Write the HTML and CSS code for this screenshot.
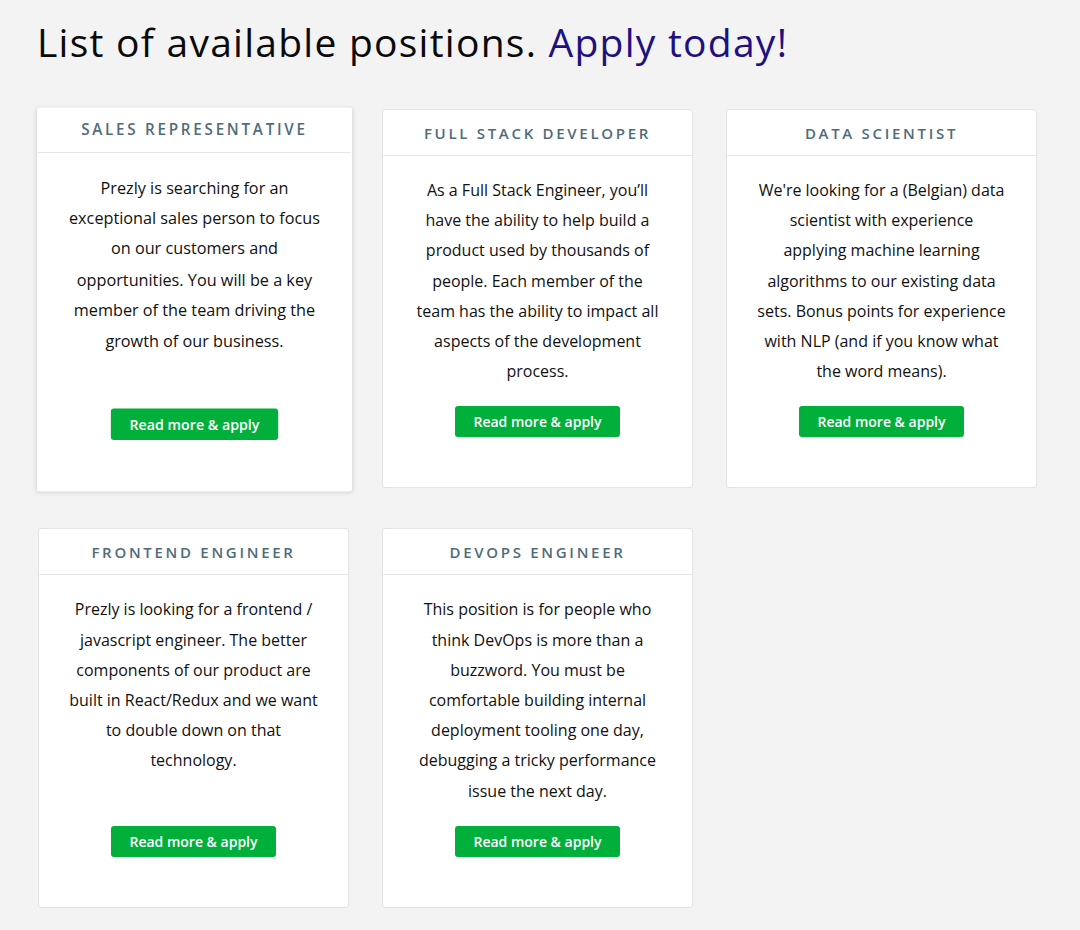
FILE: index.html
```html
<!DOCTYPE html>
<html lang="en">
<head>
<meta charset="utf-8">
<title>Available positions</title>
<link rel="stylesheet" href="styles.css">
</head>
<body>
<main class="page">
  <h1 class="title">List of available positions. <span class="title-accent">Apply today!</span></h1>
  <div class="grid">
    <article class="card card--active">
      <h2 class="card-head">Sales Representative</h2>
      <div class="card-body">
        <p class="card-text">Prezly is searching for an exceptional sales person to focus on our customers and opportunities. You will be a key member of the team driving the growth of our business.</p>
        <a class="btn" href="#">Read more &amp; apply</a>
      </div>
    </article>
    <article class="card">
      <h2 class="card-head">Full Stack Developer</h2>
      <div class="card-body">
        <p class="card-text">As a Full Stack Engineer, you’ll have the ability to help build a product used by thousands of people. Each member of the team has the ability to impact all aspects of the development process.</p>
        <a class="btn" href="#">Read more &amp; apply</a>
      </div>
    </article>
    <article class="card">
      <h2 class="card-head">Data Scientist</h2>
      <div class="card-body">
        <p class="card-text">We're looking for a (Belgian) data scientist with experience applying machine learning algorithms to our existing data sets. Bonus points for experience with NLP (and if you know what the word means).</p>
        <a class="btn" href="#">Read more &amp; apply</a>
      </div>
    </article>
    <article class="card">
      <h2 class="card-head">Frontend Engineer</h2>
      <div class="card-body">
        <p class="card-text">Prezly is looking for a frontend / javascript engineer. The better components of our product are built in React/Redux and we want to double down on that technology.</p>
        <a class="btn" href="#">Read more &amp; apply</a>
      </div>
    </article>
    <article class="card">
      <h2 class="card-head">DevOps Engineer</h2>
      <div class="card-body">
        <p class="card-text">This position is for people who think DevOps is more than a buzzword. You must be comfortable building internal deployment tooling one day, debugging a tricky performance issue the next day.</p>
        <a class="btn" href="#">Read more &amp; apply</a>
      </div>
    </article>
  </div>
</main>
</body>
</html>
```
FILE: styles.css
```css
* { box-sizing: border-box; }
html, body { margin: 0; padding: 0; }
body {
  background: #f3f3f3;
  font-family: "Open Sans", "Liberation Sans", Arial, sans-serif;
  color: #111;
}
.page {
  padding: 16px 0 40px 38px;
}
.title {
  margin: 0 0 41px -1px;
  font-size: 39px;
  font-weight: 500;
  letter-spacing: 1.25px;
  line-height: 52px;
  color: #0a0a0a;
}
.title-accent { color: #1e1080; }
.grid {
  display: grid;
  grid-template-columns: repeat(3, 311px);
  column-gap: 33px;
  row-gap: 40px;
}
.card {
  display: flex;
  flex-direction: column;
  background: #fff;
  border: 1px solid #e3e3e3;
  border-radius: 3px;
}
.card--active {
  border-color: transparent;
  box-shadow: 0 1px 4px rgba(0, 0, 0, 0.12);
  transform: translate(1px, 1px) scale(1.014);
}
.card--active .card-head {
  padding-top: 10px;
  padding-bottom: 13px;
}
.card-head {
  margin: 0;
  padding: 13px 10px 12px;
  border-bottom: 1px solid #e6e6e6;
  text-align: center;
  font-size: 15px;
  line-height: 20px;
  font-weight: 600;
  letter-spacing: 2.7px;
  text-transform: uppercase;
  color: #4f6c7a;
}
.card-body {
  flex: 1;
  display: flex;
  flex-direction: column;
  align-items: center;
  padding: 19px 30px 50px;
}
.card-text {
  margin: 0 0 20px;
  text-align: center;
  font-size: 16px;
  line-height: 30.2px;
  color: #111;
}
.btn {
  margin-top: auto;
  display: inline-block;
  padding: 5px 18px;
  background: #00b03b;
  color: #fff;
  border-radius: 3px;
  font-size: 14px;
  line-height: 21px;
  font-weight: 600;
  text-decoration: none;
}
```
